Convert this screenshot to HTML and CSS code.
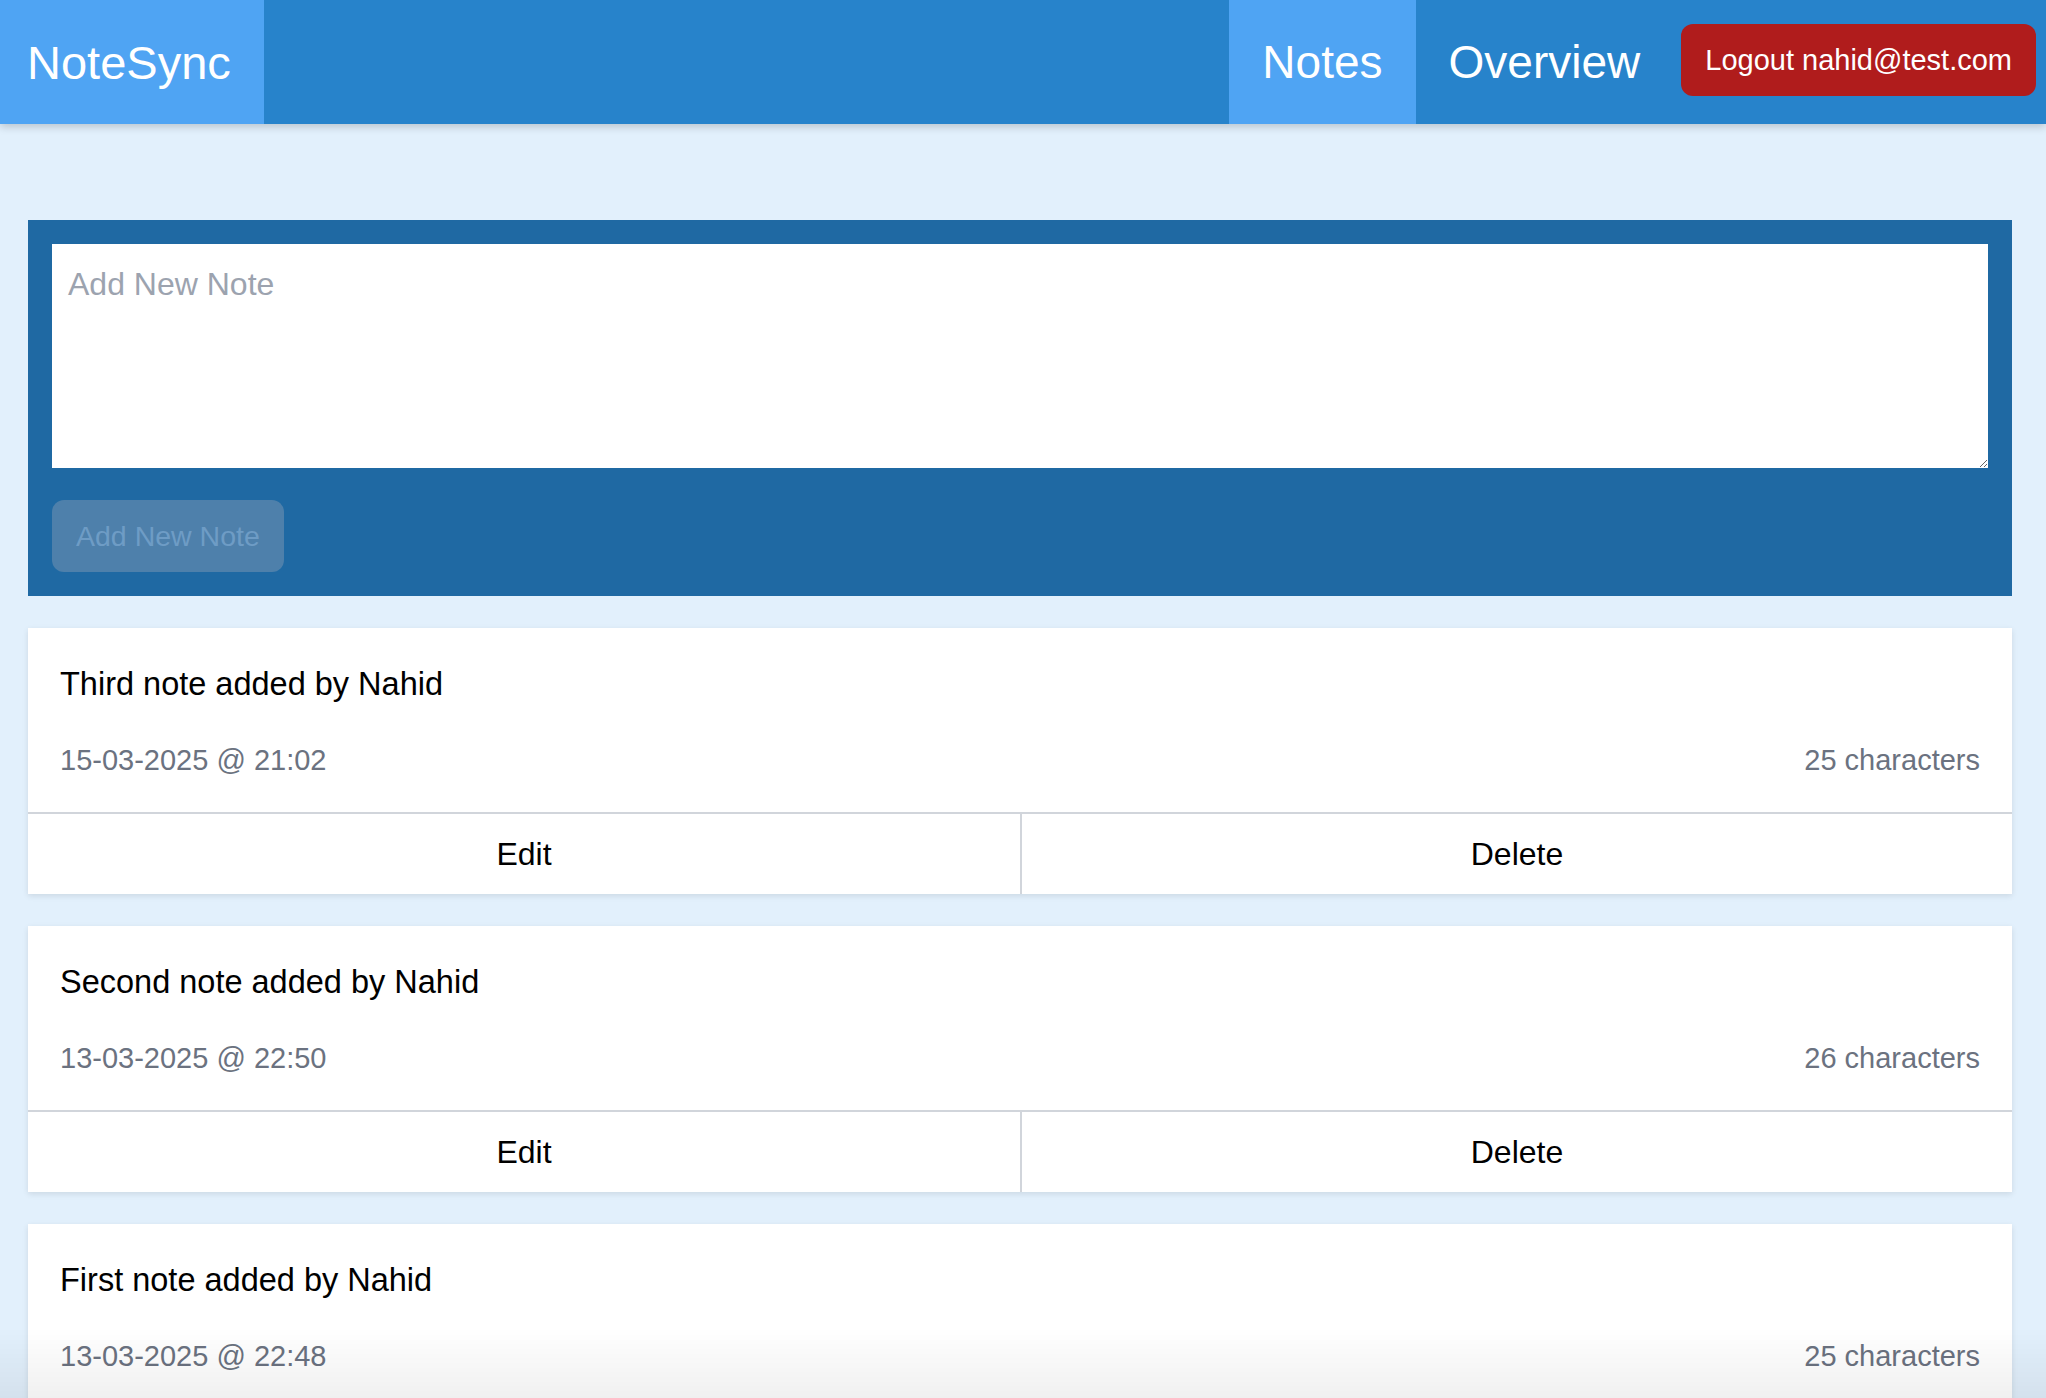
FILE: index.html
```html
<!DOCTYPE html>
<html lang="en">
<head>
<meta charset="utf-8">
<title>NoteSync</title>
<link rel="stylesheet" href="styles.css">
</head>
<body>
<nav class="navbar">
  <a class="brand" href="#">NoteSync</a>
  <div class="nav-spacer"></div>
  <a class="nav-link active" href="#">Notes</a>
  <a class="nav-link" href="#">Overview</a>
  <button class="logout" type="button">Logout nahid@test.com</button>
</nav>
<main class="main">
  <form class="new-note">
    <textarea class="new-note-input" rows="4" placeholder="Add New Note"></textarea>
    <button class="new-note-btn" type="button" disabled>Add New Note</button>
  </form>
  <ul class="notes">
    <li class="note">
      <div class="note-body">
        <p class="note-text">Third note added by Nahid</p>
        <div class="note-meta"><span>15-03-2025 @ 21:02</span><span>25 characters</span></div>
      </div>
      <div class="note-actions"><button type="button" class="action">Edit</button><button type="button" class="action">Delete</button></div>
    </li>
    <li class="note">
      <div class="note-body">
        <p class="note-text">Second note added by Nahid</p>
        <div class="note-meta"><span>13-03-2025 @ 22:50</span><span>26 characters</span></div>
      </div>
      <div class="note-actions"><button type="button" class="action">Edit</button><button type="button" class="action">Delete</button></div>
    </li>
    <li class="note">
      <div class="note-body">
        <p class="note-text">First note added by Nahid</p>
        <div class="note-meta"><span>13-03-2025 @ 22:48</span><span>25 characters</span></div>
      </div>
      <div class="note-actions"><button type="button" class="action">Edit</button><button type="button" class="action">Delete</button></div>
    </li>
  </ul>
</main>
<div class="bottom-fade"></div>
</body>
</html>
```

FILE: styles.css
```css
* { box-sizing: border-box; }

html, body {
  margin: 0;
  padding: 0;
  overflow: hidden;
}

body {
  background: #e2f0fc;
  font-family: "Liberation Sans", Arial, sans-serif;
  color: #000;
}

.navbar {
  display: flex;
  align-items: stretch;
  height: 124px;
  background: #2783cb;
  padding-right: 10px;
  box-shadow: 0 3px 8px rgba(0, 0, 0, 0.18);
  position: relative;
  z-index: 1;
}

.brand,
.nav-link {
  display: flex;
  align-items: center;
  padding: 0 33px;
  color: #fff;
  text-decoration: none;
  font-size: 46px;
}

.brand {
  background: #4fa4f3;
  padding-left: 27px;
  font-size: 47px;
}

.nav-spacer { flex: 1; }

.nav-link.active { background: #4fa4f3; }

.logout {
  align-self: center;
  margin-left: 8px;
  margin-bottom: 4px;
  background: #b01c1c;
  color: #fff;
  border: none;
  border-radius: 12px;
  padding: 16px 24px;
  font-family: inherit;
  font-size: 29px;
  line-height: 40px;
}

.main {
  padding: 96px 34px 0 28px;
}

.new-note {
  background: #1f69a3;
  padding: 24px;
  margin: 0;
}

.new-note-input {
  display: block;
  width: 100%;
  height: 224px;
  padding: 16px;
  border: none;
  outline: none;
  font-family: inherit;
  font-size: 32px;
  line-height: 48px;
  background: #fff;
  resize: vertical;
}

.new-note-input::placeholder { color: #9ca3af; }

.new-note-btn {
  display: block;
  margin-top: 32px;
  padding: 16px 24px;
  border: none;
  border-radius: 12px;
  background: #4e80ab;
  color: #6e9cc5;
  font-family: inherit;
  font-size: 28.5px;
  line-height: 40px;
}

.notes {
  list-style: none;
  margin: 0;
  padding: 0;
}

.note {
  margin-top: 32px;
  background: #fff;
  box-shadow: 0 2px 6px rgba(0, 0, 0, 0.1);
}

.note-body { padding: 32px; }

.note-text {
  margin: 0;
  font-size: 32.5px;
  line-height: 48px;
}

.note-meta {
  display: flex;
  justify-content: space-between;
  margin-top: 32px;
  font-size: 29px;
  line-height: 40px;
  color: #6b7280;
}

.note-actions {
  display: grid;
  grid-template-columns: 1fr 1fr;
  border-top: 2px solid #d1d5db;
}

.action {
  background: #fff;
  border: none;
  padding: 16px 0;
  font-family: inherit;
  font-size: 32px;
  line-height: 48px;
  color: #000;
}

.action + .action { border-left: 2px solid #d1d5db; }

.bottom-fade {
  position: fixed;
  left: 0;
  right: 0;
  bottom: 0;
  height: 70px;
  background: linear-gradient(to bottom, rgba(0, 0, 0, 0), rgba(0, 0, 0, 0.06));
  pointer-events: none;
}
```
